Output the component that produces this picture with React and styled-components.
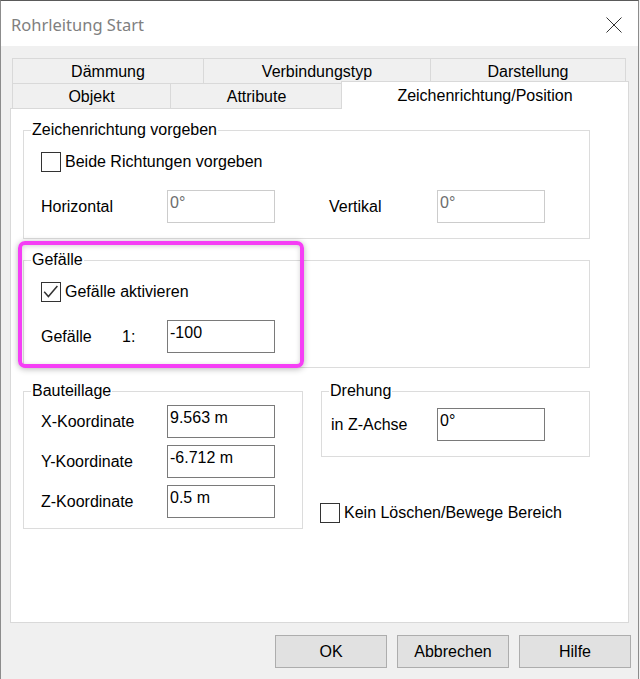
import React from 'react';
import styled, { createGlobalStyle } from 'styled-components';

const GlobalStyle = createGlobalStyle`
  html, body { margin: 0; padding: 0; background: #f0f0f0; }
  body {
    font-family: "Liberation Sans", Arial, sans-serif;
    font-size: 16px;
    color: #000;
  }
  * { box-sizing: border-box; }
`;

const Window = styled.div`
  width: 639px;
  height: 679px;
  border: 1px solid #8c8c8c;
  border-top-color: #5a5a5a;
  border-bottom: none;
  background: #f0f0f0;
  display: flex;
  flex-direction: column;
  overflow: hidden;
`;

const TitleBar = styled.div`
  height: 45px;
  flex-shrink: 0;
  background: #fff;
  display: flex;
  align-items: center;
  justify-content: space-between;
  padding: 1px 16px 0 10px;
`;

const Title = styled.span`
  font-family: "Noto Sans", "Open Sans", sans-serif;
  font-size: 16.5px;
  color: #808080;
`;

const CloseBtn = styled.svg`
  width: 16px;
  height: 16px;
  margin-top: 1px;
`;

const Body = styled.div`
  flex: 1;
  padding: 12px 7px 0 9px;
`;

const Tabs = styled.div`
  margin-left: 2px;
  width: 617px;
`;

const TabRow = styled.div`
  display: flex;
  height: ${p => (p.$back ? 26 : 25)}px;
  margin-top: ${p => (p.$back ? 0 : -1)}px;
`;

const Tab = styled.div`
  width: ${p => p.$w}px;
  height: ${p => (p.$active ? 28 : p.$back ? 26 : 25)}px;
  margin-left: ${p => (p.$active ? -2 : -1)}px;
  margin-top: ${p => (p.$active ? -2 : 0)}px;
  &:first-child { margin-left: 0; }
  padding-top: ${p => (p.$active ? 0 : 1)}px;
  border: 1px solid #d9d9d9;
  border-bottom: ${p => (p.$back ? '1px solid #d9d9d9' : 'none')};
  background: ${p => (p.$active ? '#fff' : '#f0f0f0')};
  position: ${p => (p.$active ? 'relative' : 'static')};
  z-index: ${p => (p.$active ? 1 : 'auto')};
  display: flex;
  align-items: center;
  justify-content: center;
  white-space: nowrap;
`;

const Panel = styled.div`
  position: relative;
  width: 619px;
  height: 515px;
  border: 1px solid #d9d9d9;
  background: #fff;
  padding-left: 12px;
  display: flex;
  flex-direction: column;
  align-items: flex-start;
`;

const Group = styled.div`
  width: ${p => p.$w}px;
  margin-top: ${p => p.$mt || 0}px;
  border: 1px solid #dcdcdc;
  display: flex;
  flex-direction: column;
  align-items: flex-start;
`;

const Legend = styled.span`
  margin: -10px 0 0 7px;
  padding: 0 1px;
  background: #fff;
  line-height: 18px;
  white-space: nowrap;
`;

const GroupBody = styled.div`
  align-self: stretch;
  padding: ${p => p.$pad};
  display: flex;
  flex-direction: column;
  align-items: flex-start;
  gap: ${p => p.$gap || 0}px;
`;

const Row = styled.div`
  display: flex;
  align-items: center;
  margin-top: ${p => p.$mt || 0}px;
  margin-left: ${p => p.$ml || 0}px;
`;

const Label = styled.span`
  width: ${p => p.$w}px;
  margin-left: ${p => p.$ml || 0}px;
  flex-shrink: 0;
  white-space: nowrap;
`;

const Field = styled.div`
  width: 108px;
  height: 33px;
  flex-shrink: 0;
  border: 1px solid ${p => (p.$disabled ? '#cccccc' : '#7a7a7a')};
  background: #fff;
  padding: 2px 2px;
  line-height: 20px;
  color: ${p => (p.$disabled ? '#6d6d6d' : '#000')};
`;

const Box = styled.span`
  width: 20px;
  height: 20px;
  border: 1px solid #333;
  background: #fff;
  flex-shrink: 0;
  display: flex;
`;

const BoxText = styled.span`
  margin-left: 4px;
  white-space: nowrap;
`;

const BottomRow = styled.div`
  display: flex;
  align-items: flex-start;
  margin-top: 23px;
`;

const SideColumn = styled.div`
  margin-left: 18px;
  display: flex;
  flex-direction: column;
  align-items: flex-start;
`;

const Highlight = styled.div`
  position: absolute;
  left: 7px;
  top: 132px;
  width: 286px;
  height: 127px;
  border: 4px solid #f53ef5;
  border-radius: 7px;
  box-shadow: 0 1px 6px rgba(0, 0, 0, 0.3), inset 0 1px 5px rgba(0, 0, 0, 0.18);
  pointer-events: none;
`;

const ButtonRow = styled.div`
  display: flex;
  justify-content: flex-end;
  gap: 10px;
  margin-top: 12px;
`;

const Button = styled.button`
  width: 112px;
  height: 33px;
  border: 1px solid #adadad;
  background: #e1e1e1;
  font-family: "Liberation Sans", Arial, sans-serif;
  font-size: 16px;
  color: #000;
  padding: 0;
`;

const Check = ({ checked, children, ml }) => (
  <Row $ml={ml}>
    <Box>
      {checked && (
        <svg width="18" height="18" viewBox="0 0 18 18">
          <polyline points="2.2,8.8 6.4,13.6 15.4,3" fill="none" stroke="#333" strokeWidth="1.5" />
        </svg>
      )}
    </Box>
    <BoxText>{children}</BoxText>
  </Row>
);

const App = () => (
  <>
    <GlobalStyle />
    <Window>
      <TitleBar>
        <Title>Rohrleitung Start</Title>
        <CloseBtn viewBox="0 0 16 16">
          <path d="M0.5 0.5 L15.5 15.5 M15.5 0.5 L0.5 15.5" stroke="#333" strokeWidth="1" fill="none" />
        </CloseBtn>
      </TitleBar>
      <Body>
        <Tabs>
          <TabRow $back>
            <Tab $back $w={192}>Dämmung</Tab>
            <Tab $back $w={228}>Verbindungstyp</Tab>
            <Tab $back $w={196}>Darstellung</Tab>
          </TabRow>
          <TabRow>
            <Tab $w={159}>Objekt</Tab>
            <Tab $w={173}>Attribute</Tab>
            <Tab $active $w={288}>Zeichenrichtung/Position</Tab>
          </TabRow>
        </Tabs>
        <Panel>
          <Group $w={567} $mt={21}>
            <Legend>Zeichenrichtung vorgeben</Legend>
            <GroupBody $pad="13px 0 15px 17px">
              <Check>Beide Richtungen vorgeben</Check>
              <Row $mt={18}>
                <Label $w={126}>Horizontal</Label>
                <Field $disabled>0°</Field>
                <Label $w={108} $ml={54}>Vertikal</Label>
                <Field $disabled>0°</Field>
              </Row>
            </GroupBody>
          </Group>

          <Group $w={567} $mt={21}>
            <Legend>Gefälle</Legend>
            <GroupBody $pad="13px 0 14px 17px">
              <Check checked>Gefälle aktivieren</Check>
              <Row $mt={18}>
                <Label $w={81}>Gefälle</Label>
                <Label $w={45}>1:</Label>
                <Field>-100</Field>
              </Row>
            </GroupBody>
          </Group>

          <BottomRow>
            <Group $w={280}>
              <Legend>Bauteillage</Legend>
              <GroupBody $pad="5px 0 10px 17px" $gap={7}>
                <Row>
                  <Label $w={126}>X-Koordinate</Label>
                  <Field>9.563 m</Field>
                </Row>
                <Row>
                  <Label $w={126}>Y-Koordinate</Label>
                  <Field>-6.712 m</Field>
                </Row>
                <Row>
                  <Label $w={126}>Z-Koordinate</Label>
                  <Field>0.5 m</Field>
                </Row>
              </GroupBody>
            </Group>
            <SideColumn>
              <Group $w={269}>
                <Legend>Drehung</Legend>
                <GroupBody $pad="8px 0 15px 9px">
                  <Row>
                    <Label $w={106}>in Z-Achse</Label>
                    <Field>0°</Field>
                  </Row>
                </GroupBody>
              </Group>
              <Row $mt={46} $ml={-1}>
                <Check>Kein Löschen/Bewege Bereich</Check>
              </Row>
            </SideColumn>
          </BottomRow>

          <Highlight />
        </Panel>
        <ButtonRow>
          <Button>OK</Button>
          <Button>Abbrechen</Button>
          <Button>Hilfe</Button>
        </ButtonRow>
      </Body>
    </Window>
  </>
);

export default App;
